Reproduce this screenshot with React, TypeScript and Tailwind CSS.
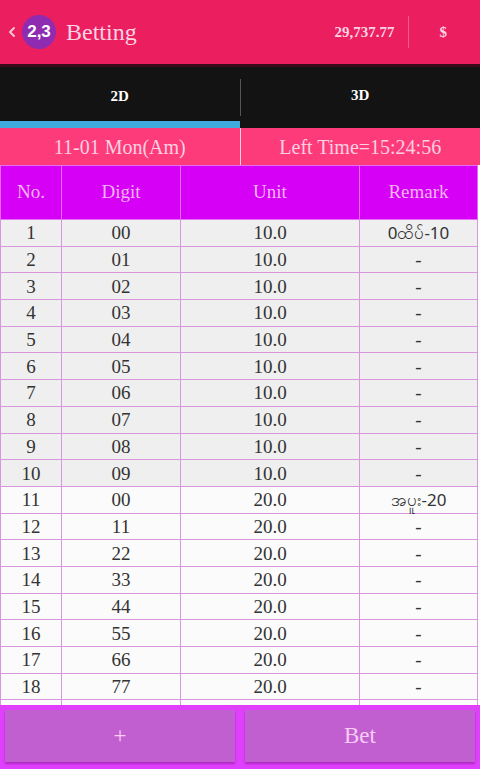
import { ChevronLeft } from "lucide-react";

const serif = "font-['Liberation_Serif','DejaVu_Serif',serif]";

type Row = { no: number; digit: string; unit: string; remark: string };

const rows: Row[] = [
  ...["00", "01", "02", "03", "04", "05", "06", "07", "08", "09"].map((d, i) => ({
    no: i + 1,
    digit: d,
    unit: "10.0",
    remark: i === 0 ? "0ထိပ်-10" : "-",
  })),
  ...["00", "11", "22", "33", "44", "55", "66", "77"].map((d, i) => ({
    no: i + 11,
    digit: d,
    unit: "20.0",
    remark: i === 0 ? "အပူး-20" : "-",
  })),
];

const cell = "border border-[#d896dc] leading-none";

export default function App() {
  return (
    <div className={`flex h-[769px] w-[480px] flex-col overflow-hidden bg-white ${serif}`}>
      {/* top bar */}
      <header className="flex h-16 shrink-0 items-center bg-[#eb1f5f] pl-1 pr-[33px] text-[#fbd3e4]">
        <ChevronLeft size={16} strokeWidth={3} className="text-[#f6c3d8]" />
        <div className="ml-0.5 flex h-[34px] w-[34px] items-center justify-center rounded-full bg-[#8f2bb0] font-['Liberation_Sans',sans-serif] text-[17px] font-bold text-white">
          2,3
        </div>
        <span className="ml-[10px] text-[24px]">Betting</span>
        <span className="ml-auto text-[15px] font-bold">29,737.77</span>
        <span className="ml-[13px] mr-[31px] h-8 w-px bg-[#f25a8a]" />
        <span className="text-[15px] font-bold">$</span>
      </header>

      {/* 2D / 3D tabs */}
      <div className="flex h-16 shrink-0 border-t-[3px] border-[#3a0a18] bg-[#131313] text-[15px] font-bold text-white">
        <div className="flex flex-1 flex-col">
          <div className="flex flex-1 items-center justify-center pt-1">2D</div>
          <div className="h-[7px] bg-[#3faadc]" />
        </div>
        <div className="my-3 w-px bg-[#555]" />
        <div className="flex flex-1 items-center justify-center pb-1">3D</div>
      </div>

      {/* date / time strip */}
      <div className="flex h-[37px] shrink-0 items-center bg-[#fd3b7b] text-[20px] text-[#fcd0e0]">
        <div className="flex-1 text-center">11-01 Mon(Am)</div>
        <div className="h-full w-px bg-[#ffd0e0]" />
        <div className="flex-1 text-center">Left Time=15:24:56</div>
      </div>

      {/* bet list */}
      <div className="min-h-0 flex-1 overflow-hidden pr-[2px]">
        <table className="w-full table-fixed border-collapse text-center text-[19px] text-[#333]">
          <colgroup>
            <col className="w-[61px]" />
            <col className="w-[119px]" />
            <col className="w-[179px]" />
            <col />
          </colgroup>
          <thead>
            <tr className="h-[54px] bg-[#d500f5] text-[#f4b4f4]">
              <th className="border border-[#e76cf4] font-normal">No.</th>
              <th className="border border-[#e76cf4] font-normal">Digit</th>
              <th className="border border-[#e76cf4] font-normal">Unit</th>
              <th className="border border-[#e76cf4] font-normal">Remark</th>
            </tr>
          </thead>
          <tbody>
            {rows.map((r) => (
              <tr key={r.no} className={`h-[26.7px] ${r.no <= 10 ? "bg-[#efefef]" : "bg-[#fbfbfb]"}`}>
                <td className={cell}>{r.no}</td>
                <td className={cell}>{r.digit}</td>
                <td className={cell}>{r.unit}</td>
                <td className={cell}>
                  {r.remark === "-" ? (
                    r.remark
                  ) : (
                    <span className="font-['Noto_Sans',sans-serif] text-[17px]">{r.remark}</span>
                  )}
                </td>
              </tr>
            ))}
            <tr className="h-[26.7px] bg-[#fbfbfb]">
              <td className={cell} />
              <td className={cell} />
              <td className={cell} />
              <td className={cell} />
            </tr>
          </tbody>
        </table>
      </div>

      {/* actions */}
      <div className="flex h-16 shrink-0 gap-[10px] bg-[#e040fb] px-[5px] pb-[7px] pt-[5px]">
        <button className="flex-1 bg-[#c25fd0] text-[23px] text-[#f7cdf4] shadow-[0_2px_2px_rgba(80,0,90,0.35)]">
          +
        </button>
        <button className="flex-1 bg-[#c25fd0] text-[23px] text-[#f7cdf4] shadow-[0_2px_2px_rgba(80,0,90,0.35)]">
          Bet
        </button>
      </div>
    </div>
  );
}
